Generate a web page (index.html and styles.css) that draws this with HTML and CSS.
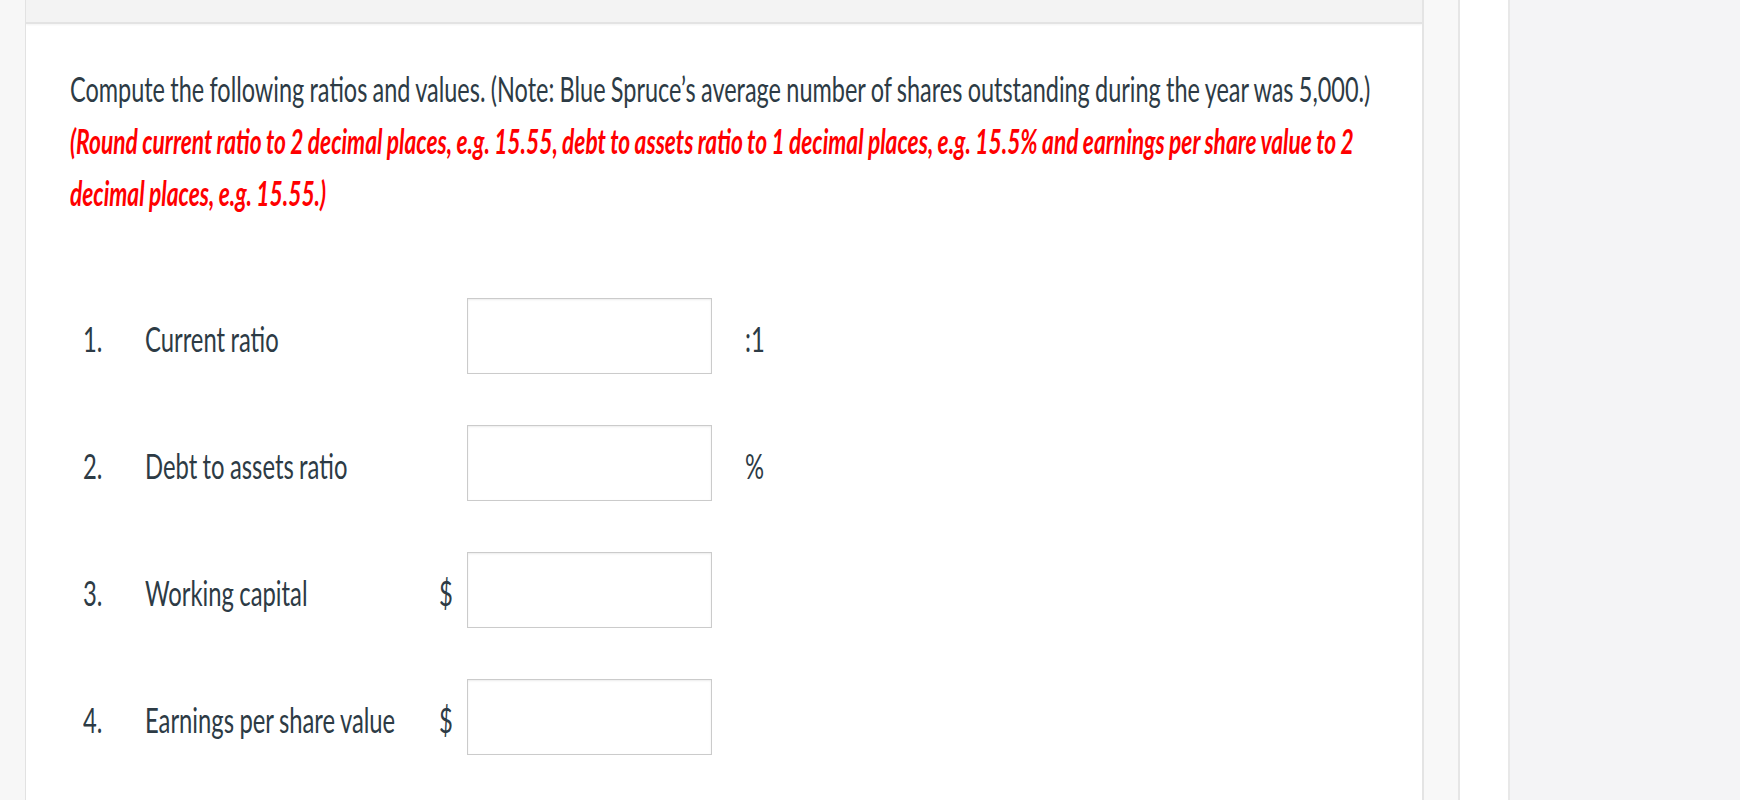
FILE: index.html
```html
<!DOCTYPE html>
<html lang="en">
<head>
<meta charset="utf-8">
<title>Ratios</title>
<link rel="stylesheet" href="styles.css">
</head>
<body>
<div class="gutter"></div>
<main class="panel">
  <div class="panel-head"></div>
  <div class="content">
    <p class="intro"><span class="sq">Compute the following ratios and values. (Note: Blue Spruce’s average number of shares outstanding during the year was 5,000.)</span></p>
    <p class="note"><span class="sq">(Round current ratio to 2 decimal places, e.g. 15.55, debt to assets ratio to 1 decimal places, e.g. 15.5% and earnings per share value to 2</span><br><span class="sq">decimal places, e.g. 15.55.)</span></p>
    <div class="rows">
      <div class="row">
        <span class="num"><span class="sq">1.</span></span>
        <span class="label"><span class="sq">Current ratio</span></span>
        <span class="cur"></span>
        <input class="box" type="text">
        <span class="suffix"><span class="sq">:1</span></span>
      </div>
      <div class="row">
        <span class="num"><span class="sq">2.</span></span>
        <span class="label"><span class="sq">Debt to assets ratio</span></span>
        <span class="cur"></span>
        <input class="box" type="text">
        <span class="suffix"><span class="sq">%</span></span>
      </div>
      <div class="row">
        <span class="num"><span class="sq">3.</span></span>
        <span class="label"><span class="sq">Working capital</span></span>
        <span class="cur"><span class="sq sq-r">$</span></span>
        <input class="box" type="text">
        <span class="suffix"></span>
      </div>
      <div class="row">
        <span class="num"><span class="sq">4.</span></span>
        <span class="label"><span class="sq">Earnings per share value</span></span>
        <span class="cur"><span class="sq sq-r">$</span></span>
        <input class="box" type="text">
        <span class="suffix"></span>
      </div>
    </div>
  </div>
</main>
<div class="strip"></div>
<div class="side"></div>
<div class="rest"></div>
</body>
</html>
```
FILE: styles.css
```css
:root {
  --sx: 0.69;
  --ink: #2d3b45;
}
* { box-sizing: border-box; }
html, body {
  margin: 0;
  height: 800px;
  overflow: hidden;
}
body {
  display: flex;
  background: #f4f4f6;
  font-family: Lato, "Open Sans", sans-serif;
  color: var(--ink);
}
.gutter {
  width: 25px;
  flex: none;
  background: #f7f7f7;
}
.panel {
  width: 1399px;
  flex: none;
  background: #fff;
  border-left: 1px solid #e2e2e2;
  border-right: 2px solid #e4e4e4;
  overflow: hidden;
}
.panel-head {
  height: 24px;
  background: #f3f3f3;
  border-bottom: 2px solid #e3e3e3;
  box-shadow: 0 1px 2px rgba(0,0,0,0.05);
}
.content {
  padding: 45px 0 0 44px;
}
.sq {
  display: inline-block;
  white-space: nowrap;
  word-spacing: -1px;
  transform: scaleX(var(--sx));
  transform-origin: 0 0;
}
.sq-r { transform-origin: 100% 0; }
.intro {
  margin: 0;
  font-size: 34px;
  line-height: 40px;
}
.note {
  --sx: 0.67;
  margin: 6px 0 0;
  font-size: 34px;
  line-height: 52px;
  color: #ff0000;
  font-weight: 700;
  font-style: italic;
}
.rows {
  --sx: 0.70;
  margin-top: 79px;
  display: flex;
  flex-direction: column;
  gap: 51px;
}
.row {
  display: grid;
  grid-template-columns: 62px 280px 42px 245px auto;
  align-items: center;
  height: 76px;
  padding-left: 13px;
  font-size: 34px;
  line-height: 40px;
}
.num, .label, .suffix, .cur { padding-top: 5px; }
.cur {
  text-align: right;
  padding-right: 14px;
}
.suffix { padding-left: 33px; }
.box {
  width: 245px;
  height: 76px;
  margin: 0;
  border: 1px solid #cbcbcb;
  border-radius: 0;
  background: #fff;
  box-shadow: inset 0 1px 2px rgba(0,0,0,0.08);
  font: inherit;
}
.strip {
  width: 36px;
  flex: none;
  background: #f8f8f8;
  border-right: 2px solid #e6e6e6;
}
.side {
  width: 50px;
  flex: none;
  background: #fff;
  border-right: 2px solid #e8e8e8;
}
.rest {
  flex: 1;
  background: #f4f4f6;
}
```
